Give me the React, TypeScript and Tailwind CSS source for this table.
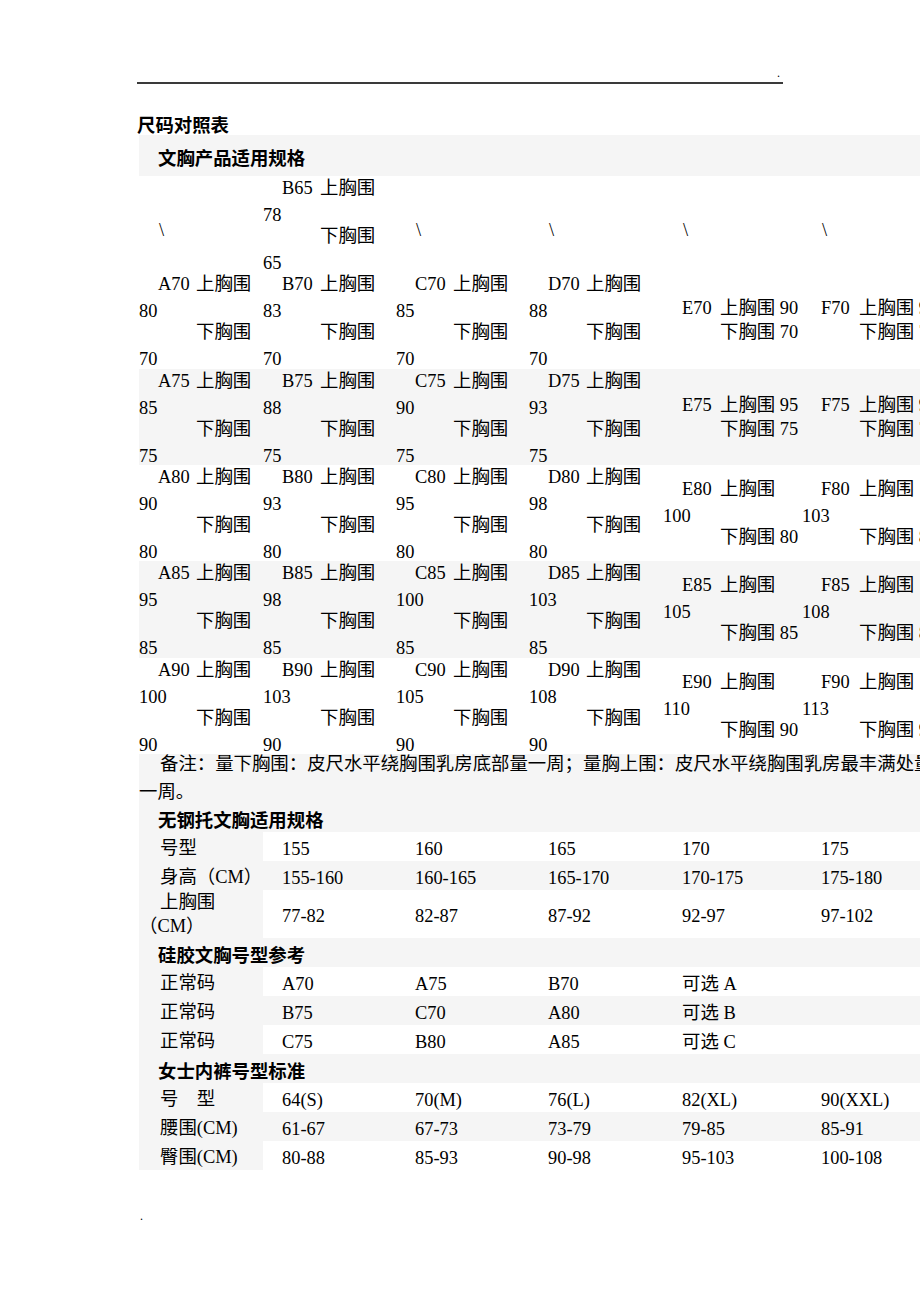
import * as React from 'react';

type BraCell = { code: string; top: number; bottom: number; mode: 'four' | 'two' | 'three' } | null;

const offsets = [10, 13, 15, 18, 20, 23];
const letters = ['A', 'B', 'C', 'D', 'E', 'F'];

// first row only has B65, the rest are "\"
const braRows: BraCell[][] = [
  [null, { code: 'B65', top: 78, bottom: 65, mode: 'four' }, null, null, null, null],
  ...[70, 75, 80, 85, 90].map((n) =>
    letters.map((l, i) => ({
      code: `${l}${n}`,
      top: n + offsets[i],
      bottom: n,
      mode: i < 4 ? 'four' : n < 80 ? 'two' : 'three',
    }) as BraCell)
  ),
];

const noWireRows = [
  { label: ['号型'], values: ['155', '160', '165', '170', '175'], grey: false, tall: false },
  { label: ['身高（CM）'], values: ['155-160', '160-165', '165-170', '170-175', '175-180'], grey: true, tall: false },
  { label: ['上胸围', '（CM）'], values: ['77-82', '82-87', '87-92', '92-97', '97-102'], grey: false, tall: true },
];

const siliconeRows = [
  { label: ['正常码'], values: ['A70', 'A75', 'B70', '可选 A', ''], grey: false, tall: false },
  { label: ['正常码'], values: ['B75', 'C70', 'A80', '可选 B', ''], grey: true, tall: false },
  { label: ['正常码'], values: ['C75', 'B80', 'A85', '可选 C', ''], grey: false, tall: false },
];

const briefRows = [
  { label: ['号　型'], values: ['64(S)', '70(M)', '76(L)', '82(XL)', '90(XXL)'], grey: false, tall: false },
  { label: ['腰围(CM)'], values: ['61-67', '67-73', '73-79', '79-85', '85-91'], grey: true, tall: false },
  { label: ['臀围(CM)'], values: ['80-88', '85-93', '90-98', '95-103', '100-108'], grey: false, tall: false },
];

function Line({ children, latin }: { children: React.ReactNode; latin?: boolean }) {
  return (
    <div className={`h-[24px] whitespace-nowrap leading-[24px] ${latin ? 'pt-[3px]' : ''}`}>{children}</div>
  );
}

function SizeCell({ cell }: { cell: BraCell }) {
  if (!cell) {
    return <div className="flex items-center pl-[20px] pt-[14px]">\</div>;
  }
  const first = (
    <div className="h-[24px] whitespace-nowrap pl-[19px] leading-[24px]">
      <span className="inline-block w-[38px]">{cell.code}</span>
      上胸围{cell.mode === 'two' ? ` ${cell.top}` : ''}
    </div>
  );
  return (
    <div className="flex flex-col justify-center">
      {first}
      {cell.mode !== 'two' && <Line latin>{cell.top}</Line>}
      <div className="h-[24px] whitespace-nowrap pl-[57px] leading-[24px]">
        下胸围{cell.mode !== 'four' ? ` ${cell.bottom}` : ''}
      </div>
      {cell.mode === 'four' && <Line latin>{cell.bottom}</Line>}
    </div>
  );
}

function SectionHeader({ title, tall }: { title: string; tall?: boolean }) {
  return (
    <div
      className={`flex items-center bg-[#f5f5f5] pl-[19px] font-['Noto_Sans_CJK_SC',sans-serif] font-bold leading-[24px] ${
        tall ? 'h-[41px] pt-[2px]' : 'h-[29px] pt-[3px]'
      }`}
    >
      {title}
    </div>
  );
}

type SpecRow = { label: string[]; values: string[]; grey: boolean; tall: boolean };

function SpecTable({ title, rows }: { title: string; rows: SpecRow[] }) {
  return (
    <div>
      <SectionHeader title={title} />
      {rows.map((row, r) => (
        <div
          key={r}
          className={`grid grid-cols-[124px_133px_133px_134px_139px_139px] ${row.tall ? 'h-[48px]' : 'h-[29px]'}`}
        >
          <div
            className={`flex flex-col justify-center overflow-hidden bg-[#f5f5f5] leading-[24px] ${
              row.tall ? 'pt-[0px]' : 'pt-[4px]'
            }`}
          >
            {row.label.map((t, i) => (
              <div key={i} className={`whitespace-nowrap ${i === 0 ? 'pl-[21px]' : 'pl-[0px]'}`}>
                {t}
              </div>
            ))}
          </div>
          {row.values.map((v, i) => (
            <div
              key={i}
              className={`flex items-center overflow-hidden whitespace-nowrap pl-[19px] pt-[5px] leading-[24px] ${
                row.grey ? 'bg-[#f5f5f5]' : 'bg-white'
              }`}
            >
              {v}
            </div>
          ))}
        </div>
      ))}
    </div>
  );
}

export default function App() {
  return (
    <div className="relative h-[1302px] w-[920px] overflow-hidden bg-white font-['Liberation_Serif','Noto_Sans_CJK_SC',serif] text-[18.4px] text-black">
      {/* page header rule */}
      <div className="ml-[137px] flex h-[84px] w-[646px] items-end justify-end border-b-2 border-[#3a3a3a] pb-[3px] pr-[3px] text-[12px] leading-[12px]">
        .
      </div>

      <div className="ml-[137px] pt-[29px] font-['Noto_Sans_CJK_SC',sans-serif] font-bold leading-[22px]">
        尺码对照表
      </div>

      <div className="ml-[139px] w-[802px]">
        <SectionHeader title="文胸产品适用规格" tall />

        {braRows.map((row, r) => (
          <div
            key={r}
            className={`grid h-[96.33px] grid-cols-[124px_133px_133px_134px_139px_139px] ${
              r === 2 || r === 4 ? 'bg-[#f5f5f5]' : 'bg-white'
            }`}
          >
            {row.map((cell, c) => (
              <SizeCell key={c} cell={cell} />
            ))}
          </div>
        ))}

        <div className="flex h-[49px] flex-col bg-[#f5f5f5] leading-[28px]">
          <div className="-mt-[4px] whitespace-nowrap pl-[21px]">
            备注：量下胸围：皮尺水平绕胸围乳房底部量一周；量胸上围：皮尺水平绕胸围乳房最丰满处量
          </div>
          <div className="whitespace-nowrap">一周。</div>
        </div>

        <SpecTable title="无钢托文胸适用规格" rows={noWireRows} />
        <SpecTable title="硅胶文胸号型参考" rows={siliconeRows} />
        <SpecTable title="女士内裤号型标准" rows={briefRows} />
      </div>

      <div className="ml-[140px] mt-[40px] text-[12px] leading-[12px]">.</div>
    </div>
  );
}
